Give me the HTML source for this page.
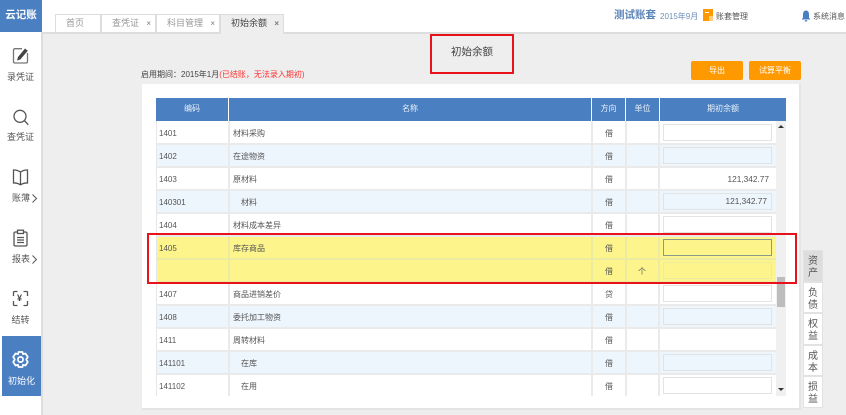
<!DOCTYPE html>
<html lang="zh"><head><meta charset="utf-8">
<style>
html,body{margin:0;padding:0}
body{width:846px;height:415px;overflow:hidden;position:relative;background:#eeeeee;font-family:"Liberation Sans","Noto Sans CJK SC",sans-serif;font-size:8px;color:#555}
div,span,svg{position:absolute;box-sizing:border-box}
.c{text-align:center}
.tab{top:14px;height:18px;background:#fff;border:1px solid #ddd;border-bottom:0;line-height:17px;color:#999;font-size:9px;padding-left:10px}
.tab b{position:absolute;right:4px;top:0;font-weight:normal;font-size:8px;color:#777}
.nav{left:0;width:41px;text-align:center;font-size:9px;color:#555;line-height:13px}
.h{top:98px;height:23px;background:#4a7fc1;color:#e8f0fa;text-align:center;line-height:22px;font-size:8px}
.r{left:156px;width:620px;height:23px;border-bottom:2px solid #eaeaea;border-left:1px solid #e6e6e6}
.r.a{background:#eef6fd}.r.w{background:#fff}.r.y{background:#fdf58c;border-bottom-color:#ececa0}
.r i{position:absolute;top:0;bottom:-2px;width:2px;background:#eaeaea}
.r.y i{background:#ececa0}
.r span{top:5px;line-height:13px;white-space:nowrap}
.i{left:506px;top:2px;width:109px;height:17px;border:1px solid #e3e3e3;background:inherit;text-align:right;padding-right:4px;line-height:15px;font-size:8.3px;color:#555}
.rt{left:803px;width:20px;background:#fff;border:1px solid #e2e2e2;font-size:10px;line-height:12px;text-align:center;color:#555;padding-top:5px}
</style></head><body>
<div style="left:0;top:0;width:846px;height:32px;background:#fff"></div>
<div style="left:0;top:32px;width:846px;height:2px;background:#ddd"></div>
<div style="left:0;top:32px;width:43px;height:383px;background:#fff;border-right:2px solid #ddd"></div>
<div class="c" style="left:0;top:0;width:42px;height:32px;background:#4a7fc1;color:#fff;font-size:10.5px;font-weight:bold;line-height:31px">云记账</div>

<div class="tab" style="left:55px;width:46px">首页</div>
<div class="tab" style="left:101px;width:55px">查凭证<b>×</b></div>
<div class="tab" style="left:156px;width:64px">科目管理<b>×</b></div>
<div class="tab" style="left:220px;width:64px;height:20px;background:#eee;color:#444">初始余额<b style="font-weight:bold">×</b></div>

<div style="left:614px;top:8px;font-size:10.5px;font-weight:bold;color:#5b84b8;white-space:nowrap;line-height:15px">测试账套</div>
<div style="left:660px;top:10px;font-size:8px;color:#6d8fbb;white-space:nowrap;line-height:13px">2015年9月</div>
<div style="left:703px;top:9px;width:10px;height:12px;background:#f90"><div style="left:2px;top:3px;width:4px;height:1px;background:#fff"></div><div style="left:6px;top:7px;width:4px;height:5px;background:#fff;opacity:.5"></div></div>
<div style="left:716px;top:10px;font-size:8px;color:#555;white-space:nowrap;line-height:13px">账套管理</div>
<svg style="left:801px;top:10px" width="10" height="12" viewBox="0 0 10 12"><path d="M5 0.5C2.8 0.5 2 2.5 2 4.500V7.500L0.800 9.500H9.200L8 7.500V4.500C8 2.500 7.200 .5 5 .5Z" fill="#4a7fc1"/><path d="M3.800 10.200H6.200V11.500H3.800Z" fill="#4a7fc1"/></svg>
<div style="left:813px;top:10px;font-size:8px;color:#555;white-space:nowrap;line-height:13px">系统消息</div>

<svg style="left:12px;top:47px" width="17" height="17" viewBox="0 0 17 17" fill="none"><path d="M10 1.700H3Q1.500 1.700 1.500 3.200V14.500Q1.500 16 3 16H14Q15.500 16 15.500 14.500V6" stroke="#777" stroke-width="1.300"/><path d="M6 10L13 1.500L15.800 3.800L8.300 12.500L5 13.500Z" fill="#444"/></svg>
<div class="nav" style="top:71px">录凭证</div>
<svg style="left:12px;top:109px" width="17" height="17" viewBox="0 0 17 17" fill="none" stroke="#555" stroke-width="1.300"><circle cx="8" cy="7.300" r="6"/><path d="M12.300 11.500L16.300 15.800"/></svg>
<div class="nav" style="top:131px">查凭证</div>
<svg style="left:12px;top:169px" width="17" height="17" viewBox="0 0 17 17" fill="none" stroke="#555" stroke-width="1.300"><path d="M8.500 3Q5 .7 1.500 1V14Q5 13.700 8.500 15.800Q12 13.700 15.500 14V1Q12 .7 8.500 3V15.800"/></svg>
<div class="nav" style="top:192px;left:12px;width:20px;text-align:left">账薄</div>
<svg style="left:31px;top:194px" width="7" height="9" viewBox="0 0 7 9" fill="none" stroke="#555" stroke-width="1"><path d="M1.500 .5L5.500 4.500L1.500 8.500"/></svg>
<svg style="left:12px;top:229px" width="17" height="18" viewBox="0 0 17 18" fill="none" stroke="#555" stroke-width="1.300"><path d="M5.500 3H3.500Q2 3 2 4.500V15.500Q2 17 3.500 17H13.500Q15 17 15 15.500V4.500Q15 3 13.500 3H11.500"/><rect x="5.500" y="1.200" width="6" height="3.300"/><path d="M5 8.500H12M5 11H12M5 13.500H12"/></svg>
<div class="nav" style="top:253px;left:12px;width:20px;text-align:left">报表</div>
<svg style="left:31px;top:255px" width="7" height="9" viewBox="0 0 7 9" fill="none" stroke="#555" stroke-width="1"><path d="M1.500 .5L5.500 4.500L1.500 8.500"/></svg>
<svg style="left:12px;top:290px" width="17" height="17" viewBox="0 0 17 17" fill="none" stroke="#555" stroke-width="1.300"><path d="M1.500 6V2.500Q1.500 1.500 2.500 1.500H5.500M11.500 1.500H14.500Q15.500 1.500 15.500 2.500V6M15.500 11V14.500Q15.500 15.500 14.500 15.500H11.500M5.500 15.500H2.500Q1.500 15.500 1.500 14.500V11"/></svg>
<div style="left:17px;top:292px;font-size:9px;font-weight:bold;color:#444;line-height:12px">¥</div>
<div class="nav" style="top:314px">结转</div>
<div style="left:2px;top:336px;width:39px;height:60px;background:#4a7fc1"></div>
<svg style="left:12px;top:351px" width="17" height="17" viewBox="0 0 17 17" fill="none" stroke="#fff" stroke-width="1.700"><path d="M6.500 1H10.500L11 3.200L13.500 2.500L15.800 6L14.200 8.500L15.800 11L13.500 14.500L11 13.800L10.500 16H6.500L6 13.800L3.500 14.500L1.200 11L2.800 8.500L1.200 6L3.500 2.500L6 3.200Z" stroke-linejoin="round"/><circle cx="8.500" cy="8.500" r="2.600"/></svg>
<div class="nav" style="top:375px;color:#fff;left:2px;width:39px">初始化</div>

<div class="c" style="left:430px;top:34px;width:84px;height:40px;border:2px solid #e8121a;font-size:10.5px;line-height:33px;color:#444">初始余额</div>
<div style="left:141px;top:68px;font-size:8px;line-height:13px;white-space:nowrap;color:#444">启用期间：2015年1月<span style="position:static;color:#f33">(已结账，无法录入期初)</span></div>
<div class="c" style="left:691px;top:61px;width:52px;height:19px;background:#f90;border-radius:2px;color:#fff;line-height:19px">导出</div>
<div class="c" style="left:749px;top:61px;width:52px;height:19px;background:#f90;border-radius:2px;color:#fff;line-height:19px">试算平衡</div>

<div style="left:142px;top:84px;width:659px;height:326px;background:#fff;border-right:2px solid #e4e4e4;border-bottom:2px solid #e4e4e4"></div>
<div class="h" style="left:156px;width:72px">编码</div>
<div class="h" style="left:229px;width:362px">名称</div>
<div class="h" style="left:592px;width:33px">方向</div>
<div class="h" style="left:626px;width:33px">单位</div>
<div class="h" style="left:660px;width:126px">期初余额</div>

<div class="r w" style="top:121px;height:24px"><i style="left:71px"></i><i style="left:434px"></i><i style="left:468px"></i><i style="left:501px"></i><span style="left:2px;top:6px">1401</span><span style="left:76px;top:6px">材料采购</span><span style="left:448px;top:6px">借</span><div class="i" style="top:3px"></div></div>
<div class="r a" style="top:145px"><i style="left:71px"></i><i style="left:434px"></i><i style="left:468px"></i><i style="left:501px"></i><span style="left:2px">1402</span><span style="left:76px">在途物资</span><span style="left:448px">借</span><div class="i"></div></div>
<div class="r w" style="top:168px"><i style="left:71px"></i><i style="left:434px"></i><i style="left:468px"></i><i style="left:501px"></i><span style="left:2px">1403</span><span style="left:76px">原材料</span><span style="left:448px">借</span><span style="right:7px;font-size:8.300px">121,342.77</span></div>
<div class="r a" style="top:191px"><i style="left:71px"></i><i style="left:434px"></i><i style="left:468px"></i><i style="left:501px"></i><span style="left:2px">140301</span><span style="left:84px">材料</span><span style="left:448px">借</span><div class="i">121,342.77</div></div>
<div class="r w" style="top:214px"><i style="left:71px"></i><i style="left:434px"></i><i style="left:468px"></i><i style="left:501px"></i><span style="left:2px">1404</span><span style="left:76px">材料成本差异</span><span style="left:448px">借</span><div class="i"></div></div>
<div class="r y" style="top:237px"><i style="left:71px"></i><i style="left:434px"></i><i style="left:468px"></i><i style="left:501px"></i><span style="left:2px">1405</span><span style="left:76px">库存商品</span><span style="left:448px">借</span><div class="i" style="border-color:#8a9a8a"></div></div>
<div class="r y" style="top:260px"><i style="left:71px"></i><i style="left:434px"></i><i style="left:468px"></i><i style="left:501px"></i><span style="left:448px">借</span><span style="left:481px">个</span><div class="i" style="border-color:#ececa0"></div></div>
<div class="r w" style="top:283px"><i style="left:71px"></i><i style="left:434px"></i><i style="left:468px"></i><i style="left:501px"></i><span style="left:2px">1407</span><span style="left:76px">商品进销差价</span><span style="left:448px">贷</span><div class="i"></div></div>
<div class="r a" style="top:306px"><i style="left:71px"></i><i style="left:434px"></i><i style="left:468px"></i><i style="left:501px"></i><span style="left:2px">1408</span><span style="left:76px">委托加工物资</span><span style="left:448px">借</span><div class="i"></div></div>
<div class="r w" style="top:329px"><i style="left:71px"></i><i style="left:434px"></i><i style="left:468px"></i><i style="left:501px"></i><span style="left:2px">1411</span><span style="left:76px">周转材料</span><span style="left:448px">借</span></div>
<div class="r a" style="top:352px"><i style="left:71px"></i><i style="left:434px"></i><i style="left:468px"></i><i style="left:501px"></i><span style="left:2px">141101</span><span style="left:84px">在库</span><span style="left:448px">借</span><div class="i"></div></div>
<div class="r w" style="top:375px;height:21px;border-bottom:0"><i style="left:71px;bottom:0"></i><i style="left:434px;bottom:0"></i><i style="left:468px;bottom:0"></i><i style="left:501px;bottom:0"></i><span style="left:2px">141102</span><span style="left:84px">在用</span><span style="left:448px">借</span><div class="i"></div></div>

<div style="left:776px;top:121px;width:10px;height:275px;background:#f0f0f0"></div>
<div style="left:777px;top:277px;width:8px;height:30px;background:#bdbdbd"></div>
<div style="left:778px;top:125px;width:0;height:0;border:3px solid transparent;border-top:0;border-bottom:3px solid #333"></div>
<div style="left:778px;top:388px;width:0;height:0;border:3px solid transparent;border-bottom:0;border-top:3px solid #333"></div>

<div style="left:147px;top:233px;width:650px;height:51px;border:2px solid #e8121a"></div>

<div class="rt" style="top:250px;height:32px;background:#ddd">资<br>产</div>
<div class="rt" style="top:282px;height:31px">负<br>债</div>
<div class="rt" style="top:313px;height:32px">权<br>益</div>
<div class="rt" style="top:345px;height:31px">成<br>本</div>
<div class="rt" style="top:376px;height:32px">损<br>益</div>
</body></html>
